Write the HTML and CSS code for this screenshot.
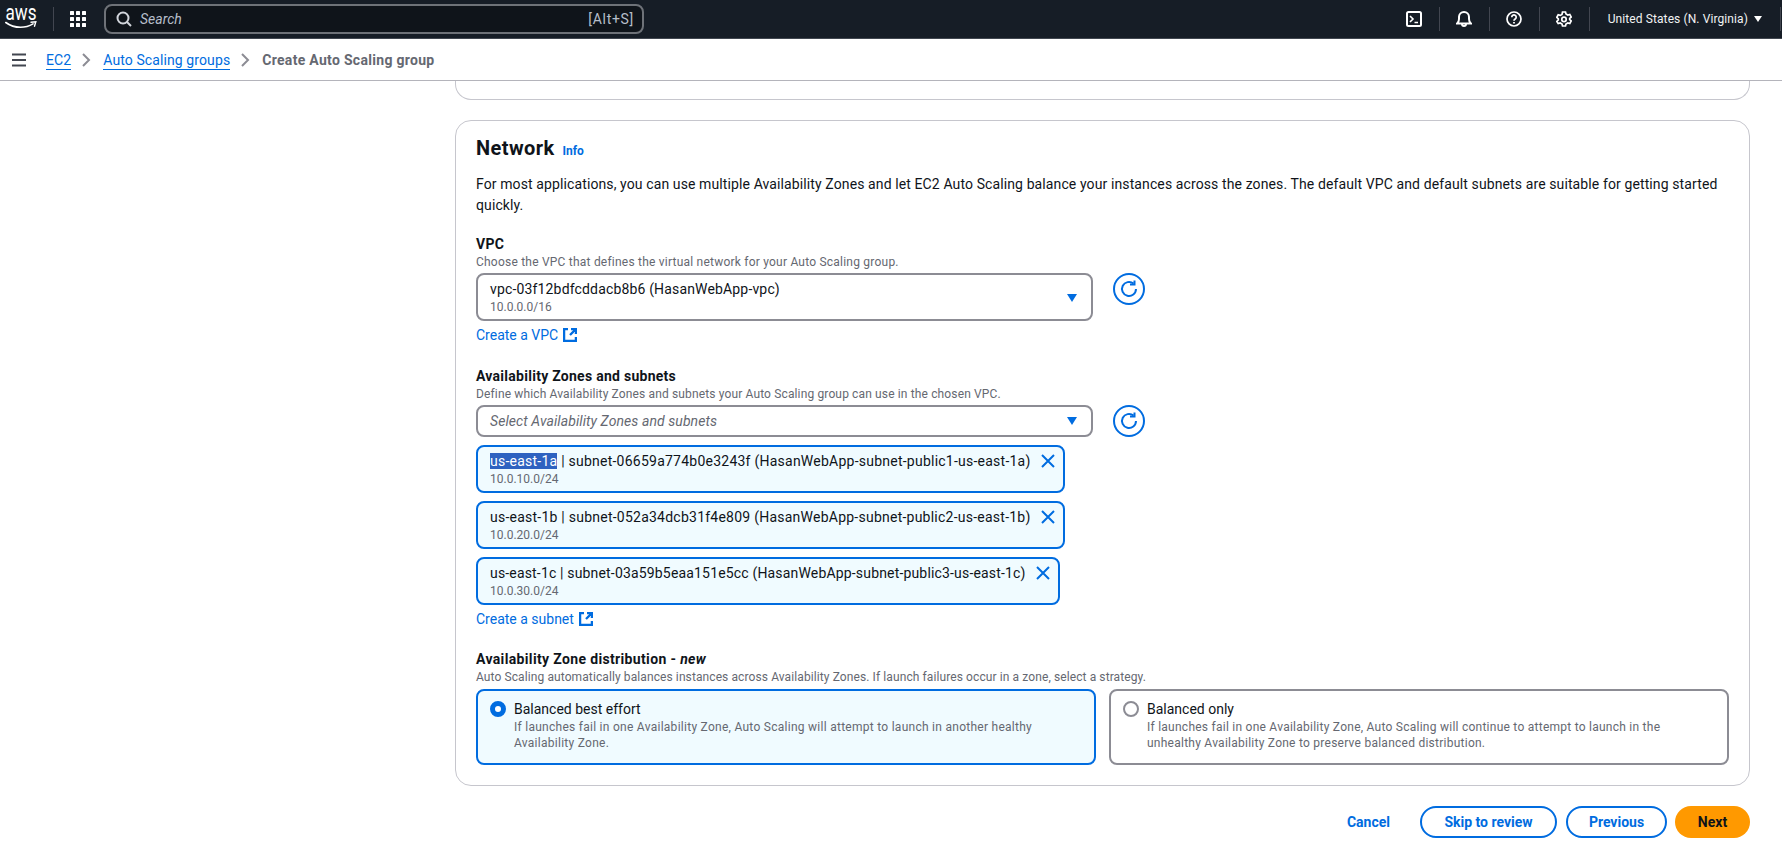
FILE: index.html
```html
<!DOCTYPE html>
<html lang="en">
<head>
<meta charset="utf-8">
<title>Create Auto Scaling group</title>
<link rel="stylesheet" href="styles.css">
</head>
<body>
<header class="topnav">
  <svg class="aws-logo" width="40" height="38" viewBox="0 0 40 38"><text x="0.500" y="20" class="aws-word" textLength="31" lengthAdjust="spacingAndGlyphs">aws</text><path d="M0.800 22.500c4.600 3.400 9.700 4.800 14.700 4.800 4 0 8.500-1 12.500-3.400" fill="none" stroke="#fff" stroke-width="1.600" stroke-linecap="round"/><path d="M26 22.300l4.800-.5-1.300 4.400" fill="none" stroke="#fff" stroke-width="1.400" stroke-linecap="round"/></svg>
  <span class="nav-sep logo-sep"></span>
  <svg class="apps" width="16" height="16" viewBox="0 0 16 16" fill="#fff"><rect x="0" y="0" width="4" height="4" rx=".5"/><rect x="6" y="0" width="4" height="4" rx=".5"/><rect x="12" y="0" width="4" height="4" rx=".5"/><rect x="0" y="6" width="4" height="4" rx=".5"/><rect x="6" y="6" width="4" height="4" rx=".5"/><rect x="12" y="6" width="4" height="4" rx=".5"/><rect x="0" y="12" width="4" height="4" rx=".5"/><rect x="6" y="12" width="4" height="4" rx=".5"/><rect x="12" y="12" width="4" height="4" rx=".5"/></svg>
  <div class="search">
    <svg width="16" height="16" viewBox="0 0 16 16" fill="none" stroke="#d1d5db" stroke-width="2"><circle cx="7" cy="7" r="5.500"/><path d="M11 11l4 4"/></svg>
    <span class="search-text">Search</span>
    <span class="search-key">[Alt+S]</span>
  </div>
  <div class="nav-right">
    <svg class="nav-icon" width="16" height="16" viewBox="0 0 16 16" fill="none" stroke="#fff" stroke-width="2"><rect x="1" y="1" width="14" height="14" rx="1.500"/><path d="M4 5l3 3-3 3M8.500 11.500h3.500" stroke-width="1.600"/></svg>
    <span class="nav-sep"></span>
    <svg class="nav-icon" width="16" height="16" viewBox="0 0 16 16" fill="none" stroke="#fff" stroke-width="2"><path d="M1 12.500h14c-1.500-1-2-2.500-2-4.500V6a5 5 0 0 0-10 0v2c0 2-.5 3.500-2 4.500z"/><path d="M6 13c0 1.500.8 2 2 2s2-.5 2-2"/></svg>
    <span class="nav-sep"></span>
    <svg class="nav-icon" width="16" height="16" viewBox="0 0 16 16" fill="none" stroke="#fff" stroke-width="1.700"><circle cx="8" cy="8" r="7"/><path d="M5.800 6.200a2.200 2.200 0 1 1 3.400 1.800c-.8.500-1.200 1-1.200 1.800"/><path d="M8 11v1.600" stroke-width="1.800"/></svg>
    <span class="nav-sep"></span>
    <svg class="nav-icon" width="16" height="16" viewBox="0 0 16 16" fill="none" stroke="#fff" stroke-width="1.700"><path d="M6.500 1h3l.5 2 1.800 1 2-.6 1.400 2.600-1.500 1.400v1.200l1.500 1.400-1.400 2.600-2-.6-1.800 1-.5 2h-3l-.5-2-1.800-1-2 .6L.8 10.400l1.500-1.400V7.800L.8 6.400 2.200 3.800l2 .6L6 3.400z"/><circle cx="8" cy="8.400" r="2.200"/></svg>
    <span class="nav-sep"></span>
    <span class="region">United States (N. Virginia)</span>
    <span class="region-caret"></span>
    <span class="nav-sep end-sep"></span>
  </div>
</header>

<nav class="crumbs">
  <svg class="menu" width="16" height="14" viewBox="0 0 16 14" fill="none" stroke="#424650" stroke-width="2"><path d="M1 1.500h14M1 7h14M1 12.500h14"/></svg>
  <a class="crumb">EC2</a>
  <svg class="chev" width="10" height="14" viewBox="0 0 10 14" fill="none" stroke="#8c8c94" stroke-width="2"><path d="M2 1l6 6-6 6"/></svg>
  <a class="crumb">Auto Scaling groups</a>
  <svg class="chev" width="10" height="14" viewBox="0 0 10 14" fill="none" stroke="#8c8c94" stroke-width="2"><path d="M2 1l6 6-6 6"/></svg>
  <span class="crumb-current">Create Auto Scaling group</span>
</nav>

<main class="main">
  <div class="prev-card"></div>
  <section class="card">
    <h2 class="title">Network <a class="info">Info</a></h2>
    <p class="intro">For most applications, you can use multiple Availability Zones and let EC2 Auto Scaling balance your instances across the zones. The default VPC and default subnets are suitable for getting started quickly.</p>

    <div class="field vpc-field">
      <div class="label">VPC</div>
      <div class="desc">Choose the VPC that defines the virtual network for your Auto Scaling group.</div>
      <div class="select-row">
        <div class="select tall">
          <div><div class="value vpc-value">vpc-03f12bdfcddacb8b6 (HasanWebApp-vpc)</div><div class="sub">10.0.0.0/16</div></div>
          <span class="caret"></span>
        </div>
        <span class="refresh"><svg width="18" height="18" viewBox="0 0 18 18" fill="none" stroke="#006ce0" stroke-width="2"><path d="M13.500 3.600A7 7 0 1 0 16 9"/><path d="M14.500 0.500v4h-4.500"/></svg></span>
      </div>
      <a class="ext">Create a VPC <svg width="14" height="14" viewBox="0 0 14 14" fill="none" stroke="#006ce0" stroke-width="2.300"><path d="M5 1.100H1.100v11.800h11.800V9M8 1.100h4.900V6M12.900 1.100L7 7"/></svg></a>
    </div>

    <div class="field az-field">
      <div class="label">Availability Zones and subnets</div>
      <div class="desc">Define which Availability Zones and subnets your Auto Scaling group can use in the chosen VPC.</div>
      <div class="select-row">
        <div class="select short"><span class="placeholder">Select Availability Zones and subnets</span><span class="caret"></span></div>
        <span class="refresh"><svg width="18" height="18" viewBox="0 0 18 18" fill="none" stroke="#006ce0" stroke-width="2"><path d="M13.500 3.600A7 7 0 1 0 16 9"/><path d="M14.500 0.500v4h-4.500"/></svg></span>
      </div>
      <div class="chips">
        <div class="chip">
          <div><div class="value"><span class="sel">us-east-1a</span> | subnet-06659a774b0e3243f (HasanWebApp-subnet-public1-us-east-1a)</div><div class="sub">10.0.10.0/24</div></div>
          <svg class="x" width="14" height="14" viewBox="0 0 14 14" stroke="#006ce0" stroke-width="2"><path d="M1 1l12 12M13 1L1 13"/></svg>
        </div>
        <div class="chip">
          <div><div class="value">us-east-1b | subnet-052a34dcb31f4e809 (HasanWebApp-subnet-public2-us-east-1b)</div><div class="sub">10.0.20.0/24</div></div>
          <svg class="x" width="14" height="14" viewBox="0 0 14 14" stroke="#006ce0" stroke-width="2"><path d="M1 1l12 12M13 1L1 13"/></svg>
        </div>
        <div class="chip">
          <div><div class="value">us-east-1c | subnet-03a59b5eaa151e5cc (HasanWebApp-subnet-public3-us-east-1c)</div><div class="sub">10.0.30.0/24</div></div>
          <svg class="x" width="14" height="14" viewBox="0 0 14 14" stroke="#006ce0" stroke-width="2"><path d="M1 1l12 12M13 1L1 13"/></svg>
        </div>
      </div>
      <a class="ext">Create a subnet <svg width="14" height="14" viewBox="0 0 14 14" fill="none" stroke="#006ce0" stroke-width="2.300"><path d="M5 1.100H1.100v11.800h11.800V9M8 1.100h4.900V6M12.900 1.100L7 7"/></svg></a>
    </div>

    <div class="field dist-field">
      <div class="label">Availability Zone distribution - <em>new</em></div>
      <div class="desc">Auto Scaling automatically balances instances across Availability Zones. If launch failures occur in a zone, select a strategy.</div>
      <div class="tiles">
        <div class="tile on">
          <span class="radio"></span>
          <div><div class="tile-title">Balanced best effort</div><div class="tile-desc">If launches fail in one Availability Zone, Auto Scaling will attempt to launch in another healthy Availability Zone.</div></div>
        </div>
        <div class="tile">
          <span class="radio"></span>
          <div><div class="tile-title">Balanced only</div><div class="tile-desc">If launches fail in one Availability Zone, Auto Scaling will continue to attempt to launch in the unhealthy Availability Zone to preserve balanced distribution.</div></div>
        </div>
      </div>
    </div>
  </section>

  <div class="actions">
    <a class="btn link">Cancel</a>
    <a class="btn normal skip">Skip to review</a>
    <a class="btn normal prev">Previous</a>
    <a class="btn primary">Next</a>
  </div>
</main>
</body>
</html>
```
FILE: styles.css
```css
* { box-sizing: border-box; }
html, body { margin: 0; height: 100%; overflow: hidden; background: #fff; }
body { font-family: Roboto, "Liberation Sans", sans-serif; font-size: 14px; line-height: 20px; color: #0f141a; }
a { color: #006ce0; }

.topnav { height: 39px; background: #161d26; border-bottom: 1px solid #414750; display: flex; align-items: center; padding: 0 1px 0 5px; color: #fff; }
.aws-logo { flex: none; }
.aws-word { font-family: Roboto, sans-serif; font-size: 22px; fill: #fff; }
.nav-sep { width: 1px; height: 24px; background: #424650; flex: none; }
.logo-sep { margin-left: 8px; }
.apps { margin-left: 16px; flex: none; }
.search { margin-left: 18px; width: 540px; height: 30px; background: #0f141a; border: 2px solid #6e7278; border-radius: 8px; display: flex; align-items: center; padding: 0 8px 0 10px; }
.search-text { font-style: italic; color: #b6bec9; margin-left: 8px; font-size: 14px; }
.search-key { margin-left: auto; color: #b6bec9; font-size: 14px; letter-spacing: .7px; }
.nav-right { margin-left: auto; display: flex; align-items: center; }
.nav-icon { flex: none; margin: 0 16.500px; }
.region { font-size: 12px; letter-spacing: .1px; margin-left: 18px; color: #f1f3f3; white-space: nowrap; }
.region-caret { width: 0; height: 0; border: 4.500px solid transparent; border-top: 6px solid #fff; border-bottom: 0; margin-left: 6px; }
.end-sep { margin-left: 18px; }

.crumbs { height: 42px; display: flex; align-items: center; padding: 1px 0 0 11px; background: #fff; border-bottom: 1px solid #b4b4bb; font-size: 14px; }
.menu { flex: none; margin-right: 19px; }
.crumb { color: #006ce0; border-bottom: 1px solid #006ce0; line-height: 18px; letter-spacing: .1px; }
.chev { margin: 0 12px 0 10px; flex: none; }
.crumb-current { font-weight: 700; color: #656871; letter-spacing: .3px; }

.main { margin-left: 455px; width: 1295px; }
.prev-card { height: 19px; border: 1px solid #c6c6cd; border-top: 0; border-radius: 0 0 16px 16px; }
.card { margin-top: 20px; height: 666px; border: 1px solid #c6c6cd; border-radius: 16px; padding: 14px 20px 0; }
.title { margin: 0; font-size: 20px; line-height: 26px; font-weight: 700; display: flex; align-items: baseline; letter-spacing: .4px; }
.info { font-size: 12px; font-weight: 700; margin-left: 8px; letter-spacing: 0; }
.intro { margin: 10px 0 0; line-height: 21px; letter-spacing: .11px; }
.vpc-field { margin-top: 19px; }
.az-field { margin-top: 22px; }
.dist-field { margin-top: 21px; }
.label { font-weight: 700; line-height: 18px; letter-spacing: .27px; }
.label em { font-style: italic; }
.dist-field .label { letter-spacing: .35px; }
.desc { font-size: 12px; line-height: 16px; color: #656871; margin-top: 1px; letter-spacing: .14px; }
.vpc-field .desc { letter-spacing: .22px; }
.dist-field .desc { letter-spacing: .1px; }
.select-row { display: flex; align-items: flex-start; gap: 20px; margin-top: 3px; }
.select { width: 617px; border: 2px solid #8c8c94; border-radius: 8px; display: flex; align-items: center; justify-content: space-between; padding: 0 14px 0 12px; }
.select.tall { height: 48px; padding-top: 1px; }
.select.short { height: 32px; }
.value { line-height: 18px; white-space: nowrap; letter-spacing: .24px; }
.vpc-value { letter-spacing: .16px; }
.chip:last-child .value { letter-spacing: .17px; }
.sub { font-size: 12px; line-height: 16px; color: #656871; margin-top: 1px; }
.placeholder { font-style: italic; color: #656871; letter-spacing: .08px; }
.caret { width: 0; height: 0; border: 5px solid transparent; border-top: 8px solid #006ce0; border-bottom: 0; flex: none; }
.refresh { width: 32px; height: 32px; border: 2px solid #006ce0; border-radius: 50%; display: flex; align-items: center; justify-content: center; flex: none; }
.ext { display: inline-flex; align-items: center; gap: 5px; margin-top: 5px; line-height: 18px; }
.chips { display: flex; flex-direction: column; align-items: flex-start; gap: 8px; margin-top: 8px; }
.chip { height: 48px; background: #f0fbff; border: 2px solid #006ce0; border-radius: 8px; display: flex; align-items: flex-start; padding: 5px 8px 0 12px; gap: 10px; }
.x { flex: none; margin-top: 2px; }
.sel { background: #2e62c0; color: #fff; }
.tiles { display: flex; gap: 13px; margin-top: 4px; }
.tile { height: 76px; flex: none; width: 620px; border: 2px solid #8c8c94; border-radius: 8px; display: flex; gap: 8px; padding: 10px 40px 0 12px; }
.tile.on { background: #f0fbff; border-color: #006ce0; }
.radio { width: 16px; height: 16px; border-radius: 50%; border: 2px solid #8c8c94; background: #fff; flex: none; }
.tile.on .radio { border: 5px solid #006ce0; }
.tile-title { line-height: 16px; }
.tile-desc { font-size: 12px; line-height: 16px; color: #656871; margin-top: 2px; letter-spacing: .27px; }
.tile + .tile .tile-desc { letter-spacing: .25px; }
.actions { display: flex; justify-content: flex-end; align-items: center; gap: 8px; margin-top: 20px; }
.btn { height: 32px; border-radius: 16px; display: flex; align-items: center; justify-content: center; font-weight: 700; font-size: 14px; }
.link { color: #006ce0; margin-right: 22px; }
.normal { border: 2px solid #006ce0; color: #006ce0; }
.skip { width: 137px; margin-right: 1px; }
.prev { width: 101px; }
.primary { width: 75px; background: #ff9900; color: #0f141a; }
```
